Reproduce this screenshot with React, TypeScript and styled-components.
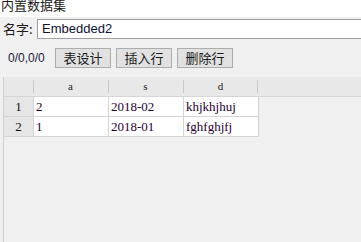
import styled, { createGlobalStyle } from 'styled-components';

interface Row {
  a: string;
  s: string;
  d: string;
}

const rows: Row[] = [
  { a: '2', s: '2018-02', d: 'khjkhjhuj' },
  { a: '1', s: '2018-01', d: 'fghfghjfj' },
];

const columns: (keyof Row)[] = ['a', 's', 'd'];

const GlobalStyle = createGlobalStyle`
  html, body {
    margin: 0;
    padding: 0;
    background: #f0f0f0;
    overflow: hidden;
    font-family: "Liberation Sans", "Noto Sans CJK SC", sans-serif;
  }
`;

export default function App() {
  return (
    <Root>
      <GlobalStyle />
      <TitleBar>
        <Title>内置数据集</Title>
      </TitleBar>

      <NameRow>
        <Label>名字:</Label>
        <NameInput defaultValue="Embedded2" />
      </NameRow>

      <Toolbar>
        <Position>0/0,0/0</Position>
        <Button>表设计</Button>
        <Button>插入行</Button>
        <Button>删除行</Button>
      </Toolbar>

      <Grid>
        <HeaderRow>
          <RowHead />
          {columns.map((c) => (
            <HeaderCell key={c}>{c}</HeaderCell>
          ))}
        </HeaderRow>
        {rows.map((r, i) => (
          <DataRow key={i}>
            <RowHead>{i + 1}</RowHead>
            {columns.map((c) => (
              <Cell key={c}>{r[c]}</Cell>
            ))}
          </DataRow>
        ))}
      </Grid>
    </Root>
  );
}

const Root = styled.div`
  width: 361px;
  height: 242px;
  display: flex;
  flex-direction: column;
  overflow: hidden;
`;

const TitleBar = styled.div`
  height: 17px;
  background: #ffffff;
  overflow: hidden;
`;

const Title = styled.div`
  margin-top: -4px;
  padding-left: 1px;
  font-family: "Noto Sans CJK SC", sans-serif;
  font-size: 13px;
  line-height: 18px;
  color: #1a1a1a;
`;

const NameRow = styled.div`
  display: flex;
  align-items: center;
  height: 21px;
  margin-top: 1px;
  padding-left: 3px;
  gap: 3px;
`;

const Label = styled.span`
  width: 31px;
  font-family: "Noto Sans CJK SC", sans-serif;
  font-size: 13px;
  color: #1a1a1a;
`;

const NameInput = styled.input`
  flex: 1;
  height: 20px;
  box-sizing: border-box;
  margin: 0 -4px 0 0;
  padding: 0 4px;
  border: 1px solid #a0a0a0;
  background: #ffffff;
  font-family: "Liberation Sans", sans-serif;
  font-size: 13px;
  color: #111133;
  outline: none;
`;

const Toolbar = styled.div`
  display: flex;
  align-items: center;
  height: 20px;
  margin-top: 9px;
  padding-left: 8px;
  gap: 5px;
`;

const Position = styled.span`
  width: 42px;
  font-family: "Liberation Sans", sans-serif;
  font-size: 12px;
  color: #1a1a3a;
`;

const Button = styled.button`
  width: 56px;
  height: 20px;
  box-sizing: border-box;
  padding: 0;
  border: 1px solid #adadad;
  background: #e1e1e1;
  font-family: "Noto Sans CJK SC", sans-serif;
  font-size: 13px;
  line-height: 18px;
  color: #1a1a1a;
`;

const Grid = styled.div`
  flex: 1;
  margin: 9px 0 0 3px;
  border-left: 1px solid #d0d0d0;
`;

const HeaderRow = styled.div`
  display: flex;
  height: 19px;
  background: #e8e8e8;
  border-bottom: 1px solid #d6d6d6;
`;

const DataRow = styled.div`
  display: flex;
  height: 20px;
`;

const RowHead = styled.div`
  width: 29px;
  box-sizing: border-box;
  background: #e6e6e6;
  border-bottom: 1px solid #d4d4d4;
  font-family: "Liberation Serif", serif;
  font-size: 13px;
  line-height: 19px;
  text-align: center;
  color: #111;

  ${HeaderRow} & {
    background: transparent;
    border-bottom: none;
  }
`;

const HeaderCell = styled.div`
  position: relative;
  width: 75px;
  font-family: "Liberation Serif", serif;
  font-size: 11px;
  line-height: 19px;
  text-align: center;
  color: #222;

  &::before {
    content: '';
    position: absolute;
    left: 0;
    top: 3px;
    height: 13px;
    border-left: 1px solid #c8c8c8;
  }

  &:last-child::after {
    content: '';
    position: absolute;
    right: 0;
    top: 3px;
    height: 13px;
    border-left: 1px solid #c8c8c8;
  }
`;

const Cell = styled.div`
  width: 75px;
  box-sizing: border-box;
  padding-left: 2px;
  background: #ffffff;
  border-left: 1px solid #d4d4d4;
  border-bottom: 1px solid #d4d4d4;
  font-family: "Liberation Serif", serif;
  font-size: 13px;
  line-height: 19px;
  color: #2a0030;

  &:last-child {
    width: 76px;
    border-right: 1px solid #d4d4d4;
  }
`;
